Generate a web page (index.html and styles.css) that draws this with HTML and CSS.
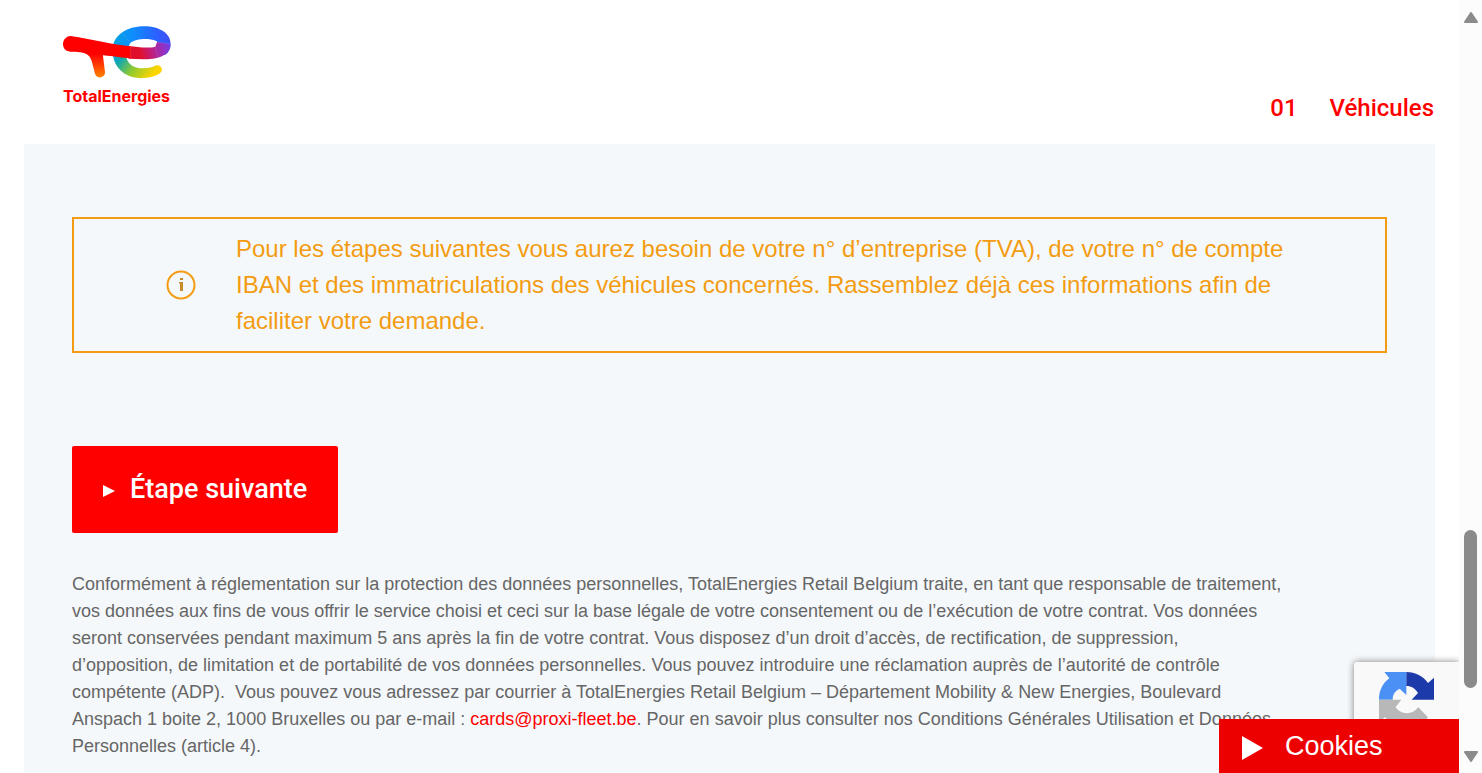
FILE: index.html
```html
<!DOCTYPE html>
<html lang="fr">
<head>
<meta charset="utf-8">
<meta name="viewport" content="width=device-width, initial-scale=1">
<title>TotalEnergies</title>
<link rel="stylesheet" href="styles.css">
</head>
<body>
<div class="viewport">
  <div class="page">
    <header class="header">
      <a class="logo" href="#" aria-label="TotalEnergies">
        <svg class="logo-mark" viewBox="39 32 327 159" aria-hidden="true">
          <defs>
            <linearGradient id="blue" x1="190" y1="0" x2="362" y2="0" gradientUnits="userSpaceOnUse">
              <stop offset="0" stop-color="#00a3e0"/><stop offset=".35" stop-color="#0f8cff"/><stop offset=".8" stop-color="#2f5cff"/><stop offset="1" stop-color="#4050f5"/>
            </linearGradient>
            <linearGradient id="violet" x1="240" y1="0" x2="358" y2="-30" gradientUnits="userSpaceOnUse">
              <stop offset="0" stop-color="#e0102c"/><stop offset=".3" stop-color="#c01f80"/><stop offset=".65" stop-color="#8a35d0"/><stop offset="1" stop-color="#4d4af0"/>
            </linearGradient>
            <linearGradient id="green" x1="190" y1="90" x2="305" y2="180" gradientUnits="userSpaceOnUse">
              <stop offset="0" stop-color="#0a9be8"/><stop offset=".3" stop-color="#10a8b0"/><stop offset=".62" stop-color="#8fca30"/><stop offset="1" stop-color="#fcd500"/>
            </linearGradient>
            <linearGradient id="red" x1="0" y1="115" x2="0" y2="186" gradientUnits="userSpaceOnUse">
              <stop offset="0" stop-color="#f00"/><stop offset="1" stop-color="#ff8200"/>
            </linearGradient>
          </defs>
          <path fill="url(#green)" d="M212 62C190 80 184 110 192 134C204 172 244 192 282 188C302 187 319 182 330 174C342 164 334 148 319 150C308 156 296 159 279 159C250 159 230 145 228 118L238 86Z"/>
          <path fill="url(#blue)" d="M188 100C190 60 230 33 282 33C330 33 363 55 362 88C361 102 355 112 345 119L316 96C327 89 328 81 317 76C298 68 258 68 241 83L229 105Z"/>
          <path fill="url(#violet)" d="M236 92C265 96 296 99 316 94L321 80L361 86C363 116 330 133 281 132L236 130Z"/>
          <path fill="#f00" d="M62 62C32 64 31 108 61 109C82 110 100 109 112 117L160 120C190 123 220 128 241 129L242 93C190 88 125 72 62 62Z"/>
          <path fill="url(#red)" d="M94 110C112 113 122 124 126 141L135 175C140 192 165 189 165 171L158 114Z"/>
          <path fill="none" stroke="#fff" stroke-opacity=".3" d="M218 56L240 81M241 93V129M316 79L362 86M316 95L324 127"/>
        </svg>
        <span class="logo-name">TotalEnergies</span>
      </a>
      <nav class="steps" aria-label="Étapes">
        <span>01</span>
        <span>Véhicules</span>
      </nav>
    </header>
    <main class="panel">
      <section class="notice">
        <svg class="notice-icon" viewBox="0 0 30 30" aria-hidden="true">
          <circle cx="15" cy="15" r="13.5" fill="none" stroke="#f39c12" stroke-width="2"/>
          <path fill="#c98a2b" d="M14 8H17V10H14ZM13 12H17V21H14V13.500H13Z"/>
        </svg>
        <p class="notice-text">Pour les étapes suivantes vous aurez besoin de votre n° d’entreprise (TVA), de votre n° de compte IBAN et des immatriculations des véhicules concernés. Rassemblez déjà ces informations afin de faciliter votre demande.</p>
      </section>
      <button class="next" type="button">
        <svg class="next-icon" viewBox="0 0 12 12" aria-hidden="true"><path fill="#fff" d="M0 0L12 6L0 12Z"/></svg>
        <span>Étape suivante</span>
      </button>
      <p class="legal">Conformément à réglementation sur la protection des données personnelles, TotalEnergies Retail Belgium traite, en tant que responsable de traitement, vos données aux fins de vous offrir le service choisi et ceci sur la base légale de votre consentement ou de l’exécution de votre contrat. Vos données seront conservées pendant maximum 5 ans après la fin de votre contrat. Vous disposez d’un droit d’accès, de rectification, de suppression, d’opposition, de limitation et de portabilité de vos données personnelles. Vous pouvez introduire une réclamation auprès de l’autorité de contrôle compétente (ADP).&nbsp; Vous pouvez vous adressez par courrier à TotalEnergies Retail Belgium – Département Mobility &amp; New Energies, Boulevard Anspach 1 boite 2, 1000 Bruxelles ou par e-mail : <a class="mail" href="mailto:cards@proxi-fleet.be">cards@proxi-fleet.be</a>. Pour en savoir plus consulter nos Conditions Générales Utilisation et Données Personnelles (article 4).</p>
    </main>
    <aside class="captcha" aria-label="reCAPTCHA">
      <svg class="captcha-icon" viewBox="0 0 168 168" aria-hidden="true">
        <path fill="#4a90f5" d="M16 0H82V69L62 50C47 57 41 68 41 83H0C0 54 11 34 31 19Z"/>
        <path fill="#1c3aa9" d="M82 0C110 0 132 12 147 33L165 17V83H98L117 63C108 49 98 42 82 42Z"/>
        <path fill="#b8b8b8" d="M0 83H67L50 105C64 129 100 130 118 106L147 136C134 155 112 166 82 166C54 166 33 156 18 135L0 152Z"/>
      </svg>
    </aside>
    <button class="cookies" type="button">
      <svg class="cookies-icon" viewBox="0 0 21 24" aria-hidden="true"><path fill="#fff" d="M0 0L21 12L0 24Z"/></svg>
      <span>Cookies</span>
    </button>
  </div>
  <div class="scrollbar" aria-hidden="true">
    <svg class="arrow" viewBox="0 0 14 12"><path d="M7 1L13 10H1Z"/></svg>
    <div class="track"><div class="thumb"></div></div>
    <svg class="arrow" viewBox="0 0 14 12"><path d="M1 2H13L7 11Z"/></svg>
  </div>
</div>
</body>
</html>
```
FILE: styles.css
```css
* { box-sizing: border-box; }

body {
  margin: 0;
  background: #fff;
  font-family: "Liberation Sans", Arial, sans-serif;
}

.viewport {
  display: flex;
  height: 100vh;
  overflow: hidden;
}

.page {
  position: relative;
  flex: 1;
  min-width: 0;
  display: flex;
  flex-direction: column;
  padding: 0 24px;
  overflow: hidden;
}

.header {
  display: flex;
  justify-content: space-between;
  align-items: flex-start;
  flex: none;
  padding: 26px 1px 20px 39px;
}

.logo {
  display: flex;
  flex-direction: column;
  padding-bottom: 18px;
  color: #f00;
  text-decoration: none;
}

.logo-mark {
  display: block;
  width: 109px;
  height: 53px;
}

.logo-name {
  margin-top: 7px;
  font: 700 16px/20px Inter, sans-serif;
}

.steps {
  align-self: flex-end;
  display: flex;
  gap: 32px;
  color: #f00;
  font: 500 24px/32px Roboto, sans-serif;
}

.panel {
  flex: 1 0 auto;
  padding: 73px 48px 0;
  background: #f4f8fb;
}

.notice {
  display: flex;
  align-items: center;
  gap: 40px;
  padding: 12px 92px;
  border: 2px solid #f39c12;
}

.notice-icon {
  flex: none;
  width: 30px;
  height: 30px;
}

.notice-text {
  margin: 0;
  color: #f39c12;
  font-size: 24px;
  line-height: 36px;
}

.next {
  display: flex;
  align-items: center;
  gap: 15px;
  margin: 93px 0 38px;
  padding: 27px 31px 28px;
  border: 0;
  border-radius: 2px;
  background: #f00;
  color: #fff;
  font: 500 27px/32px Roboto, sans-serif;
}

.next-icon {
  width: 12px;
  height: 12px;
  margin-top: 3px;
}

.legal {
  margin: 0;
  padding-right: 105px;
  color: #666;
  font-size: 18px;
  line-height: 27px;
}

.mail {
  color: #f00;
  text-decoration: none;
}

.captcha {
  position: absolute;
  right: 0;
  bottom: 0;
  width: 105px;
  height: 111px;
  padding: 10px 25px;
  border-radius: 3px 0 0 3px;
  background: #f9f9f9;
  box-shadow: 0 0 7px #808080;
}

.captcha-icon {
  display: block;
  width: 56px;
  height: 56px;
}

.cookies {
  position: absolute;
  right: 0;
  bottom: 0;
  display: flex;
  align-items: center;
  gap: 22px;
  width: 240px;
  height: 54px;
  padding: 0 23px;
  border: 0;
  background: #ed0000;
  color: #fff;
  font: 27px/32px "Liberation Sans", Arial, sans-serif;
}

.cookies-icon {
  width: 21px;
  height: 24px;
  margin-top: 3px;
}

.scrollbar {
  flex: none;
  display: flex;
  flex-direction: column;
  align-items: center;
  width: 23px;
  padding: 12px 0 11px;
  background: #fcfcfc;
}

.arrow {
  flex: none;
  width: 14px;
  height: 12px;
  fill: #8b8b8b;
  stroke: #8b8b8b;
  stroke-width: 2;
  stroke-linejoin: round;
}

.track {
  flex: 1;
  display: flex;
  flex-direction: column;
  justify-content: flex-end;
  padding-bottom: 62px;
}

.thumb {
  width: 13px;
  height: 158px;
  border-radius: 7px;
  background: #8b8b8b;
}
```
